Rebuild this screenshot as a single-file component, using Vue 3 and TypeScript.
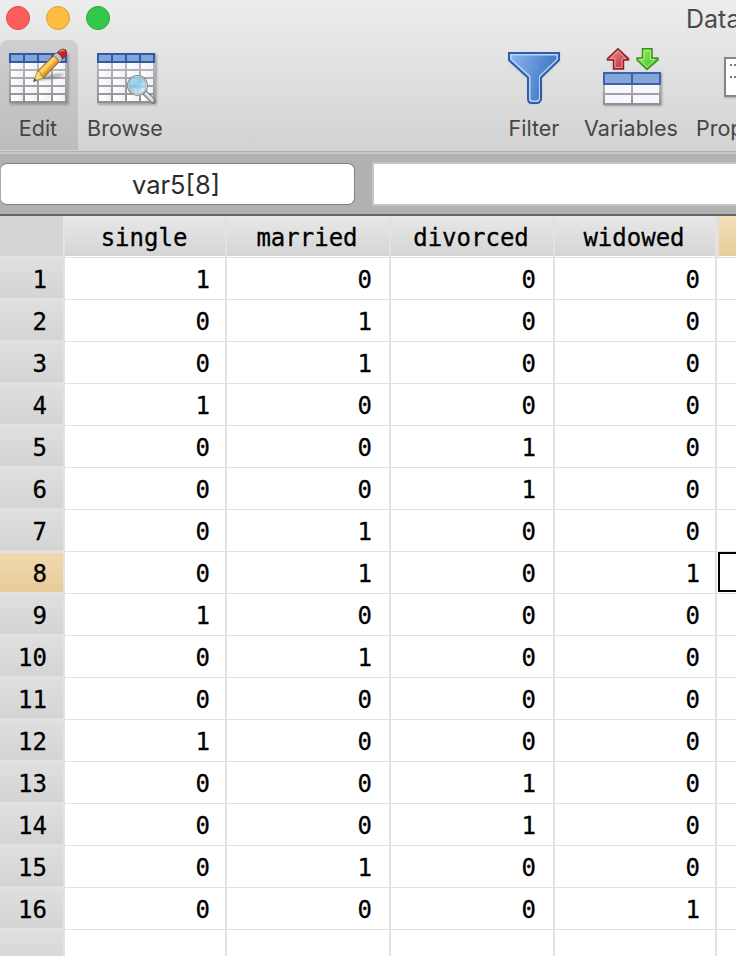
<script setup lang="ts">
const columns: string[] = ['single', 'married', 'divorced', 'widowed']
const rows: number[][] = [
  [1, 0, 0, 0], [0, 1, 0, 0], [0, 1, 0, 0], [1, 0, 0, 0],
  [0, 0, 1, 0], [0, 0, 1, 0], [0, 1, 0, 0], [0, 1, 0, 1],
  [1, 0, 0, 0], [0, 1, 0, 0], [0, 0, 0, 0], [1, 0, 0, 0],
  [0, 0, 1, 0], [0, 0, 1, 0], [0, 1, 0, 0], [0, 0, 0, 1],
]
const selectedRow = 8
const gridX = [11, 25, 39, 53]
const gridY = [9, 17, 25, 33, 41]
</script>

<template>
  <div class="window">
    <header class="chrome">
      <div class="titlebar">
        <div class="lights">
          <i class="light red"></i><i class="light yellow"></i><i class="light green"></i>
        </div>
        <div class="title">Data Editor</div>
      </div>
      <nav class="toolbar">
        <div class="tool edit">
          <svg width="64" height="60" viewBox="0 0 64 60">
            <defs>
              <linearGradient id="frame" x2="0" y2="1"><stop stop-color="#c6c6c6" /><stop offset="1" stop-color="#8f8f8f" /></linearGradient>
              <linearGradient id="cell" x2="1" y2="0"><stop stop-color="#fff" /><stop offset="1" stop-color="#edf1fa" /></linearGradient>
              <linearGradient id="wood" gradientUnits="userSpaceOnUse" x1="37" y1="15" x2="45" y2="23"><stop stop-color="#d88f28" /><stop offset=".35" stop-color="#ffdc73" /><stop offset=".6" stop-color="#f4ae38" /><stop offset="1" stop-color="#b96c14" /></linearGradient>
              <filter id="soft" x="-.4" y="-.4" width="1.8" height="1.8"><feGaussianBlur stdDeviation="1.2" /></filter>
            </defs>
            <rect x="3" y="6" width="59" height="51" fill="#777" opacity=".55" filter="url(#soft)" />
            <rect x="2" y="5" width="58" height="50" fill="url(#frame)" />
            <rect x="2" y="5" width="58" height="10" fill="#3159a7" />
            <g fill="#84a6d7"><rect x="4" y="7" width="12" height="6" /><rect x="18" y="7" width="12" height="6" /><rect x="32" y="7" width="12" height="6" /><rect x="46" y="7" width="12" height="6" /></g>
            <template v-for="y in gridY" :key="y">
              <rect v-for="x in gridX" :key="x" :x="x - 7" :y="y + 6" width="12" height="6" fill="url(#cell)" />
            </template>
            <path d="M28 33 Q45 23 57 26 Q55 31 28 33Z" fill="#555" opacity=".4" filter="url(#soft)" />
            <path d="M30.500 23 L46.500 7.500 L52.500 13.500 L36.500 30Z" fill="url(#wood)" stroke="#85551b" stroke-width=".9" />
            <path d="M26.500 33.500 L30.500 23 L33 24 L34 27 L36.500 30Z" fill="#f1dc72" stroke="#92752c" stroke-width=".7" />
            <path d="M26.300 33.700 L27.700 30.300 L29.700 32.300Z" fill="#4e4026" />
            <path d="M46 8 L50 4.500 Q54.500 6 55.500 11 L52.500 14.500 Q51 9.500 46 8Z" fill="#c4c4c4" stroke="#777" stroke-width=".8" />
            <path d="M50 4.800 Q55 -.5 58.500 1.800 Q61 5 59 7.800 L55.500 11 Q54 6 50 4.800Z" fill="#be282e" stroke="#8b1c22" stroke-width=".8" />
            <path d="M52.500 4 Q55.500 1.300 57.500 2.800" stroke="#e9797d" stroke-width="1.500" fill="none" />
          </svg>
          <span>Edit</span>
        </div>
        <div class="tool browse">
          <svg width="64" height="60" viewBox="0 0 64 60">
            <defs><linearGradient id="lens" x2=".8" y2="1"><stop stop-color="#b7e4f8" /><stop offset=".45" stop-color="#86c9ea" /><stop offset="1" stop-color="#eefaff" /></linearGradient></defs>
            <rect x="3" y="6" width="59" height="51" fill="#777" opacity=".55" filter="url(#soft)" />
            <rect x="2" y="5" width="58" height="50" fill="url(#frame)" />
            <rect x="2" y="5" width="58" height="10" fill="#3159a7" />
            <g fill="#84a6d7"><rect x="4" y="7" width="12" height="6" /><rect x="18" y="7" width="12" height="6" /><rect x="32" y="7" width="12" height="6" /><rect x="46" y="7" width="12" height="6" /></g>
            <template v-for="y in gridY" :key="y">
              <rect v-for="x in gridX" :key="x" :x="x - 7" :y="y + 6" width="12" height="6" fill="url(#cell)" />
            </template>
            <path d="M50 45 L58 53" stroke="#777" stroke-width="5.500" stroke-linecap="round" />
            <path d="M50 45 L57.500 52.500" stroke="#ccc" stroke-width="3.300" stroke-linecap="round" />
            <path d="M51 45 L57.500 51" stroke="#f4f4f4" stroke-width="1.200" />
            <circle cx="42.500" cy="37.500" r="9.500" fill="url(#lens)" fill-opacity=".9" stroke="#858585" stroke-width="2.200" />
            <circle cx="42.500" cy="37.500" r="9.200" fill="none" stroke="#ddd" stroke-width=".9" />
            <path d="M35 39H50M43 39V46" stroke="#7caebf" opacity=".5" />
          </svg>
          <span>Browse</span>
        </div>
        <div class="tool filter">
          <svg width="64" height="60" viewBox="0 0 64 60">
            <defs><linearGradient id="funnel" x2="1" y2=".3"><stop stop-color="#8ab3ee" /><stop offset="1" stop-color="#3e75c5" /></linearGradient></defs>
            <path d="M7 5H58V13L40 30V52L36 56H29L26 53V31L7 14Z" fill="#777" opacity=".3" filter="url(#soft)" />
            <path d="M7 5H57V12L39 29.500V51Q38 55 35 55H30Q26 55 26 51V29.500L7 12Z" fill="#bed3f1" stroke="#285fac" stroke-width="2" />
            <path d="M9.500 7.500H54.500V11L37 28V50Q36.500 52.500 34 52.500H31Q28.500 52.500 28.500 50V28L9.500 11Z" fill="url(#funnel)" />
          </svg>
          <span>Filter</span>
        </div>
        <div class="tool variables">
          <svg width="64" height="60" viewBox="0 0 64 60">
            <defs>
              <linearGradient id="up" x2="1" y2="1"><stop stop-color="#e99ba0" /><stop offset="1" stop-color="#bd1e25" /></linearGradient>
              <linearGradient id="down" x2="1" y2="1"><stop stop-color="#a4ef68" /><stop offset="1" stop-color="#35bb25" /></linearGradient>
            </defs>
            <rect x="4" y="25" width="58" height="33" fill="#666" opacity=".55" filter="url(#soft)" />
            <rect x="3" y="24" width="58" height="33" fill="url(#frame)" />
            <rect x="3" y="24" width="58" height="13" fill="#3a62af" />
            <path d="M5 26H31V35H5ZM33 26H59V35H33Z" fill="#84a6d7" />
            <path d="M5 37H31V45H5ZM33 37H59V45H33ZM5 47H31V55H5ZM33 47H59V55H33Z" fill="#f6f8fd" />
            <path d="M18 .8L28.500 10.500V12H23.500V21H13.500V12H7.500V10.500Z" fill="url(#up)" stroke="#8f2029" stroke-width="1.500" />
            <path d="M18 3L25.500 10.500H22V19.500H15V10.500H10.500Z" fill="none" stroke="#e99898" stroke-width="1" />
            <path d="M42.500 .8H52V10H58V12L47 21.500L37 12V10H42.500Z" fill="url(#down)" stroke="#3c911c" stroke-width="1.500" />
            <path d="M44 2.500H50.500V11.500H55L47 19L40 11.500H44Z" fill="none" stroke="#a9f482" stroke-width="1" />
          </svg>
          <span>Variables</span>
        </div>
        <div class="tool properties">
          <svg width="64" height="60" viewBox="0 0 64 60">
            <rect x="3" y="11" width="52" height="39" fill="#777" opacity=".5" filter="url(#soft)" />
            <rect x="3" y="10" width="51" height="38" fill="#fff" stroke="#858585" stroke-width="2" />
            <path d="M8 17H50M8 29H50" stroke="#777" stroke-width="2" stroke-dasharray="2 2" />
          </svg>
          <span>Properties</span>
        </div>
      </nav>
    </header>
    <section class="formula">
      <div class="cellname">var5[8]</div>
      <div class="cellvalue"></div>
    </section>
    <main class="sheet">
      <div class="row head">
        <div class="num"></div>
        <div v-for="name in columns" :key="name" class="cell">{{ name }}</div>
        <div class="cell active"></div>
      </div>
      <div v-for="(row, i) in rows" :key="i" class="row">
        <div class="num" :class="{ active: i + 1 === selectedRow }">{{ i + 1 }}</div>
        <div v-for="(value, c) in row" :key="c" class="cell" :class="{ inset: c === 1 || c === 2 }">{{ value }}</div>
        <div class="cell last"><div v-if="i + 1 === selectedRow" class="cursor"></div></div>
      </div>
      <div class="row">
        <div class="num"></div>
        <div v-for="c in 4" :key="c" class="cell"></div>
        <div class="cell last"></div>
      </div>
    </main>
  </div>
</template>

<style>
body { margin: 0; overflow: hidden; }
</style>

<style scoped>
* { box-sizing: border-box; }
.window { width: 736px; height: 956px; overflow: hidden; display: flex; flex-direction: column; background: #fff; font-family: Inter, Roboto, "Liberation Sans", sans-serif; }
.chrome { flex: none; height: 151px; background: linear-gradient(#ededed, #d2d2d2); overflow: hidden; }
.titlebar { height: 40px; display: flex; justify-content: space-between; padding: 6px 0 0 6px; }
.lights { display: flex; gap: 16px; }
.light { width: 24px; height: 24px; border-radius: 50%; border: 1px solid; }
.red { background: #fd5e5b; border-color: #df4946; }
.yellow { background: #fdbd40; border-color: #dea034; }
.green { background: #34c84a; border-color: #26a934; }
.title { width: 50px; white-space: nowrap; line-height: 27px; font-size: 25px; color: #4a4a4a; }
.toolbar { height: 111px; display: flex; }
.tool { flex: none; height: 110px; display: flex; flex-direction: column; align-items: center; padding-top: 8px; color: #454545; font-size: 21.5px; line-height: 28px; }
.tool svg { flex: none; display: block; }
.tool span { margin-top: 6px; white-space: nowrap; }
.edit { width: 78px; background: linear-gradient(#cfcfcf, #bdbdbd); border-radius: 8px 8px 0 0; }
.edit span { margin-left: -2px; }
.browse { width: 94px; }
.browse svg { margin-left: 4px; }
.filter { width: 100px; margin-left: 312px; }
.variables { width: 96px; margin-left: -1px; }
.variables svg { margin-left: 2px; }
.properties { align-items: flex-start; margin-left: 17px; }
.properties svg { margin-left: 26px; }
.formula { flex: none; height: 65px; display: flex; align-items: flex-start; gap: 17px; padding-top: 12px; border-bottom: 2px solid #666; background: linear-gradient(#b2b2b2 1px, #c7c7c7 1px 3px, #b1b1b1 3px); }
.cellname { width: 355px; height: 42px; border: 1px solid #838383; border-left-color: #aaa; border-radius: 7px; background: #fff; color: #2c2c2c; font-size: 25.5px; line-height: 42px; text-align: center; padding-right: 3px; }
.cellvalue { flex: 1; height: 44px; margin-top: -1px; border: 2px solid #c5c5c5; border-right: 0; background: #fff; }
.sheet { flex: none; font-family: "DejaVu Sans Mono", monospace; font-size: 24px; color: #000; -webkit-text-stroke: .3px #000; }
.row { display: grid; grid-template-columns: 65px 162px 164px 164px 162px 19px; grid-template-rows: 42px; height: 42px; }
.cell { border-right: 2px solid #e2e2e2; border-bottom: 1px solid #e2e2e2; text-align: right; line-height: 42px; padding: 1px 15px 0 0; }
.inset { padding-right: 17px; }
.num { border-right: 2px solid #e2e2e2; border-bottom: 3px solid #e2e2e2; background: linear-gradient(#dfdfdf, #d4d4d4); text-align: right; line-height: 42px; padding-right: 16px; margin: 1px 0 -1px; height: 42px; }
.num.active { background: linear-gradient(#efd9b0, #e8cc97); }
.head .num { margin: 0; height: 43px; background: #d5d5d5; }
.head .cell { padding: 1px 2px 0 0; text-align: center; line-height: 43px; background: linear-gradient(#e8e8e8, #d4d4d4); box-shadow: inset 0 -1px #fff; }
.head .cell.active { border-right: 0; border-left: 2px solid #e5e0d6; background: linear-gradient(#f2dfba, #e7cc96); }
.last { border-right: 0; padding: 0 0 0 1px; }
.cursor { width: 40px; height: 40px; border: 2px solid #000; }
</style>
